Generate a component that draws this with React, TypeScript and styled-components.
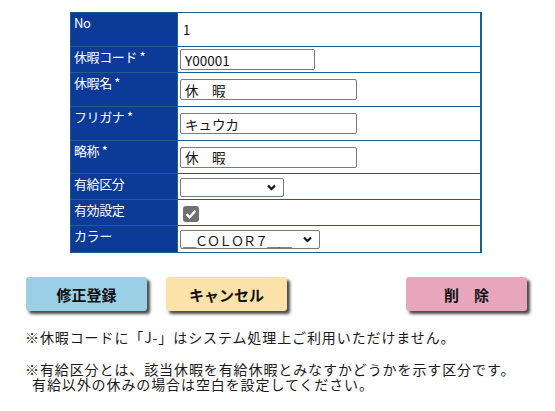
import React from "react";
import styled, { createGlobalStyle } from "styled-components";

const GlobalStyle = createGlobalStyle`
  html, body { margin: 0; padding: 0; background: #ffffff; }
  body {
    font-family: "Noto Sans CJK JP", "Noto Sans", "Liberation Sans", sans-serif;
    color: #111;
  }
`;

const Page = styled.div`
  width: 555px;
  height: 411px;
  padding-top: 12px;
  box-sizing: border-box;
  overflow: hidden;
`;

const FormTable = styled.table`
  margin-left: 70px;
  width: 412px;
  border-collapse: collapse;
  border-right: 2px solid #1d5e8c;
`;

const Row = styled.tr<{ $h: number }>`
  height: ${(p) => p.$h}px;
`;

const LabelCell = styled.th`
  width: 100px;
  padding: 2px 3px 0 3px;
  background: #0b3a99;
  color: #ffffff;
  text-align: left;
  vertical-align: top;
  font-weight: normal;
  font-size: 13px;
  line-height: 16px;
  letter-spacing: -0.4px;
  border: 1px solid #1d5e8c;
  white-space: nowrap;
`;

const ValueCell = styled.td`
  padding: 0 0 0 2px;
  vertical-align: middle;
  border: 1px solid #1d5e8c;
  font-size: 13px;
`;

const PlainValue = styled.span`
  padding-left: 3px;
  font-size: 13px;
  color: #111;
`;

const TextInput = styled.input<{ $w: number }>`
  box-sizing: border-box;
  width: ${(p) => p.$w}px;
  height: 21px;
  margin: 0;
  padding: 0 4px;
  border: 1px solid #7a7a7a;
  border-radius: 2px;
  font-family: "Noto Sans CJK JP", "Noto Sans", sans-serif;
  font-size: 13.5px;
  color: #111;
  background: #fff;
  outline: none;
`;

const SelectWrap = styled.span<{ $w: number }>`
  position: relative;
  display: inline-block;
  width: ${(p) => p.$w}px;
  height: 19px;
  vertical-align: middle;
`;

const Select = styled.select<{ $wide?: boolean }>`
  appearance: none;
  -webkit-appearance: none;
  box-sizing: border-box;
  width: 100%;
  height: 100%;
  margin: 0;
  padding: 0 0 0 2px;
  border: 1px solid #7a7a7a;
  border-radius: 2px;
  background: #fff;
  font-family: "Noto Sans CJK JP", "Noto Sans", sans-serif;
  font-size: 13px;
  letter-spacing: ${(p) => (p.$wide ? "-1px" : "0")};
  color: #111;
  outline: none;
`;

const Chevron = styled.svg`
  position: absolute;
  right: 8px;
  top: 6px;
  pointer-events: none;
`;

const CheckBox = styled.span`
  display: inline-flex;
  align-items: center;
  justify-content: center;
  width: 16px;
  height: 16px;
  margin-left: 3px;
  border-radius: 3px;
  background: #707070;
  vertical-align: middle;
`;

const ButtonRow = styled.div`
  display: flex;
  align-items: flex-start;
  gap: 19px;
  margin-top: 24px;
  padding: 0 28px 0 26px;
`;

const ActionButton = styled.button<{ $bg: string; $push?: boolean }>`
  width: 121px;
  height: 34px;
  margin: 0;
  margin-left: ${(p) => (p.$push ? "auto" : "0")};
  padding: 0;
  border: none;
  border-radius: 3px;
  background: ${(p) => p.$bg};
  box-shadow: 3px 3px 3px #4a4a4a;
  font-family: "Noto Sans CJK JP", "Noto Sans", sans-serif;
  font-size: 15px;
  font-weight: bold;
  color: #111;
`;

const Notes = styled.div`
  margin-top: 19px;
  padding-left: 25px;
  font-size: 14px;
  line-height: 15px;
  letter-spacing: 0.9px;
  color: #1a1a1a;
`;

const NoteLine = styled.div<{ $gap?: number }>`
  margin-top: ${(p) => p.$gap ?? 0}px;
  white-space: nowrap;
`;

const Indent = styled.span`
  display: inline-block;
  width: 7px;
`;

const ChevronIcon = () => (
  <Chevron width="9" height="7" viewBox="0 0 9 7">
    <path d="M1 1.5 L4.5 5 L8 1.5" fill="none" stroke="#111" strokeWidth="2.2" />
  </Chevron>
);

export default function App() {
  return (
    <Page>
      <GlobalStyle />
      <FormTable>
        <tbody>
          <Row $h={34}>
            <LabelCell>No</LabelCell>
            <ValueCell>
              <PlainValue>1</PlainValue>
            </ValueCell>
          </Row>
          <Row $h={26}>
            <LabelCell>休暇コード *</LabelCell>
            <ValueCell>
              <TextInput $w={135} defaultValue="Y00001" />
            </ValueCell>
          </Row>
          <Row $h={34}>
            <LabelCell>休暇名 *</LabelCell>
            <ValueCell>
              <TextInput $w={177} defaultValue="休　暇" />
            </ValueCell>
          </Row>
          <Row $h={34}>
            <LabelCell>フリガナ *</LabelCell>
            <ValueCell>
              <TextInput $w={177} defaultValue="キュウカ" />
            </ValueCell>
          </Row>
          <Row $h={33}>
            <LabelCell>略称 *</LabelCell>
            <ValueCell>
              <TextInput $w={177} defaultValue="休　暇" />
            </ValueCell>
          </Row>
          <Row $h={26}>
            <LabelCell>有給区分</LabelCell>
            <ValueCell>
              <SelectWrap $w={104}>
                <Select defaultValue="">
                  <option value=""></option>
                  <option value="1">有給</option>
                </Select>
                <ChevronIcon />
              </SelectWrap>
            </ValueCell>
          </Row>
          <Row $h={26}>
            <LabelCell>有効設定</LabelCell>
            <ValueCell>
              <CheckBox role="checkbox" aria-checked="true">
                <svg width="12" height="10" viewBox="0 0 12 10">
                  <path d="M1.5 5.2 L4.5 8.2 L10.5 1.8" fill="none" stroke="#fff" strokeWidth="2.4" />
                </svg>
              </CheckBox>
            </ValueCell>
          </Row>
          <Row $h={27}>
            <LabelCell>カラー</LabelCell>
            <ValueCell>
              <SelectWrap $w={140}>
                <Select $wide defaultValue="7">
                  <option value="7">＿ＣＯＬＯＲ７＿＿</option>
                </Select>
                <ChevronIcon />
              </SelectWrap>
            </ValueCell>
          </Row>
        </tbody>
      </FormTable>

      <ButtonRow>
        <ActionButton $bg="#9bcfe6">修正登録</ActionButton>
        <ActionButton $bg="#fbe2a9">キャンセル</ActionButton>
        <ActionButton $bg="#e8a6bd" $push>
          削　除
        </ActionButton>
      </ButtonRow>

      <Notes>
        <NoteLine>※休暇コードに「J-」はシステム処理上ご利用いただけません。</NoteLine>
        <NoteLine $gap={17}>
          ※有給区分とは、該当休暇を有給休暇とみなすかどうかを示す区分です。
          <br />
          <Indent />
          有給以外の休みの場合は空白を設定してください。
        </NoteLine>
      </Notes>
    </Page>
  );
}
